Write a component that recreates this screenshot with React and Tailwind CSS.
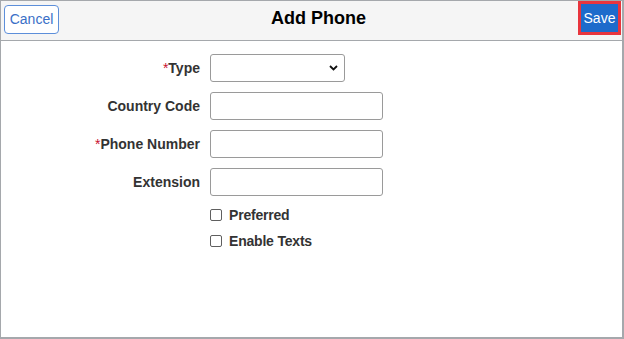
import React from 'react';

const font = { fontFamily: '"Liberation Sans", Arial, sans-serif' };

function Field({ label, required, children }) {
  return (
    <div className="flex h-[28px] items-center">
      <div className="w-[199px] text-right text-[14px] font-bold text-[#333333]">
        {required ? <span className="font-normal text-[#c8102e]">*</span> : null}
        {label}
      </div>
      <div className="ml-[10px]">{children}</div>
    </div>
  );
}

function TextInput() {
  return <input type="text" className="block h-[28px] w-[173px] rounded-[3px] border border-[#9a9a9a] bg-white px-2 text-[14px] outline-none" />;
}

function Check({ label }) {
  return (
    <label className="flex h-[14px] items-center">
      <span className="ml-[209px] h-[12px] w-[12px] rounded-[2px] border border-[#5f5f5f] bg-white" />
      <span className="ml-[7px] text-[14px] font-bold tracking-[-0.2px] text-[#333333]">{label}</span>
    </label>
  );
}

export default function App() {
  return (
    <div style={font} className="flex h-[339px] w-[624px] flex-col border-t border-r-2 border-b-2 border-l border-[#a5a8ac] bg-white">
      {/* header bar */}
      <div className="flex h-[40px] items-start border-b border-[#a5a8ac] bg-[#f5f5f5]">
        <button className="ml-[3px] mt-[4px] h-[29px] w-[55px] rounded-[4px] border border-[#5d8fda] bg-white text-[14px] text-[#3a6fc7]">
          Cancel
        </button>
        <div className="flex h-[34px] flex-1 items-center justify-center text-[18px] font-bold text-black">Add Phone</div>
        <div className="mr-[1px] border-[3px] border-[#e8353d]">
          <button className="flex h-[28px] w-[37px] items-center justify-center bg-[#1d6bcb] text-[14px] text-white">Save</button>
        </div>
      </div>

      {/* form */}
      <div className="flex flex-col gap-[10px] pt-[13px]">
        <Field label="Type" required>
          <div className="relative h-[28px] w-[135px] rounded-[3px] border border-[#9a9a9a] bg-white">
            <svg className="absolute right-[6px] top-[10px]" width="9" height="6" viewBox="0 0 9 6">
              <path d="M1 1l3.5 3.5L8 1" fill="none" stroke="#111" strokeWidth="1.8" />
            </svg>
          </div>
        </Field>
        <Field label="Country Code">
          <TextInput />
        </Field>
        <Field label="Phone Number" required>
          <TextInput />
        </Field>
        <Field label="Extension">
          <TextInput />
        </Field>
      </div>
      <div className="mt-[12px] flex flex-col gap-[12px]">
        <Check label="Preferred" />
        <Check label="Enable Texts" />
      </div>
    </div>
  );
}
